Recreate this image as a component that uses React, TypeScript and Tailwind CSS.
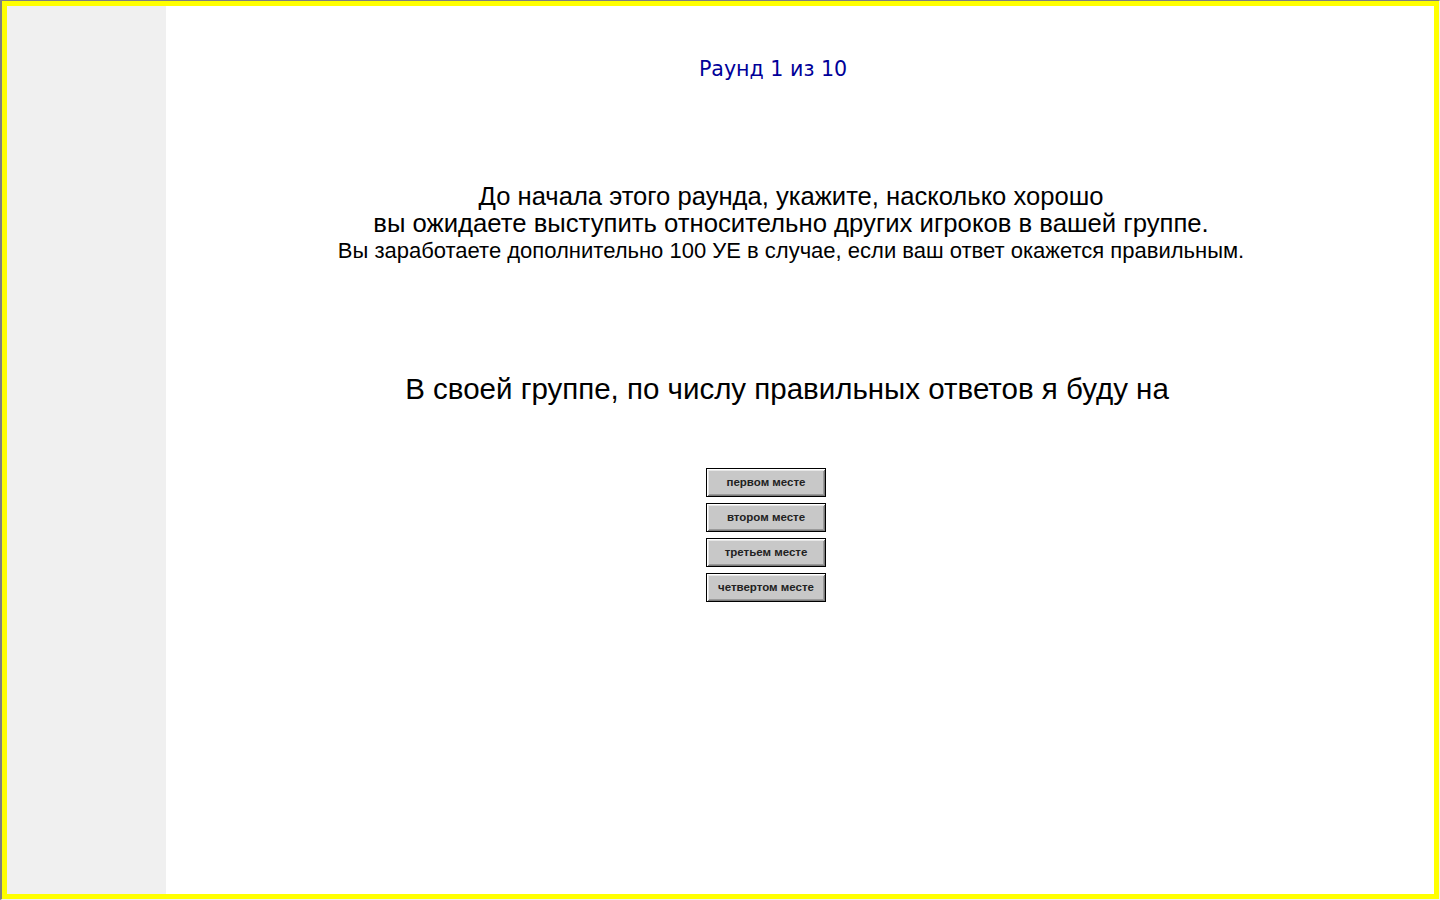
export default function App() {
	const places = ["первом месте", "втором месте", "третьем месте", "четвертом месте"];

	return (
		<div className="h-[900px] w-[1440px] overflow-hidden border-l-2 border-t border-r border-b border-l-[#808080] border-t-[#808080] border-r-[#f0f0f0] border-b-[#f0f0f0] bg-white">
			<div className="flex h-full w-full border-[5px] border-[#ffff00]">
				<div className="w-[159px] flex-shrink-0 bg-[#f0f0f0]" />
				<div className="flex flex-1 flex-col items-center font-['Liberation_Sans',Arial,sans-serif] text-black">
					<div className="mt-[50px] ml-[-54px] font-['DejaVu_Sans',Verdana,sans-serif] text-[20.6px] leading-[26px] text-[#000099]">
						Раунд 1 из 10
					</div>
					<div className="mt-[101px] ml-[-18px] flex flex-col items-center text-center">
						<p className="text-[25.6px] leading-[27px]">До начала этого раунда, укажите, насколько хорошо</p>
						<p className="text-[25.7px] leading-[27px]">вы ожидаете выступить относительно других игроков в вашей группе.</p>
						<p className="text-[22px] leading-[28px]">
							Вы заработаете дополнительно 100 УЕ в случае, если ваш ответ окажется правильным.
						</p>
					</div>
					<div className="mt-[107px] ml-[-26px] text-[29.5px] leading-[34px]">
						В своей группе, по числу правильных ответов я буду на
					</div>
					<div className="mt-[62px] ml-[-68px] flex flex-col gap-[6px]">
						{places.map((p) => (
							<button
								key={p}
								className="h-[29px] w-[120px] border border-black bg-[#c8c8c8] text-[11.5px] font-bold text-[#222] shadow-[inset_1px_1px_0_#ffffff,inset_-1px_-1px_0_#7a7a7a,inset_2px_2px_0_#e6e6e6,inset_-2px_-2px_0_#9a9a9a]"
							>
								{p}
							</button>
						))}
					</div>
				</div>
			</div>
		</div>
	);
}
